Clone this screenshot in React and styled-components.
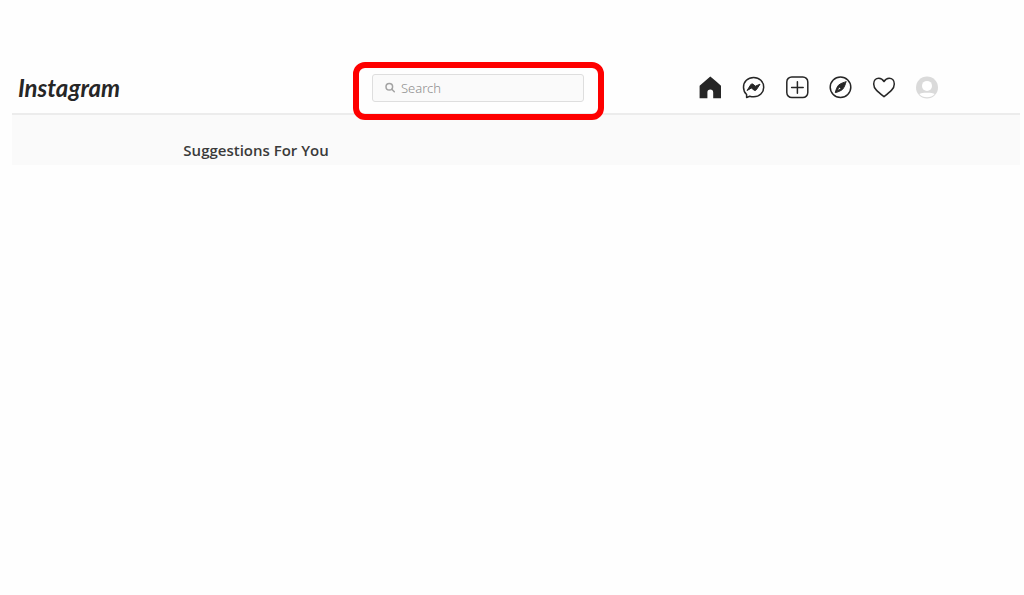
import React from "react";
import styled, { createGlobalStyle } from "styled-components";

const GlobalStyle = createGlobalStyle`
  *, *::before, *::after { box-sizing: border-box; }
  body {
    margin: 0;
    background: #fefefe;
    color: #262626;
    font-family: "Open Sans", "Noto Sans", sans-serif;
  }
`;

const Page = styled.div`
  padding: 62px 4px 0 12px;
`;

const Header = styled.header`
  display: grid;
  grid-template-columns: 1fr 212px 1fr;
  align-items: center;
  height: 53px;
  padding: 0 82px 0 6px;
  border-bottom: 2px solid #ececec;
`;

const Logo = styled.a`
  justify-self: start;
  color: #262626;
  font-family: "Lato", sans-serif;
  font-size: 24px;
  font-style: italic;
  font-weight: 700;
  line-height: 28px;
  text-decoration: none;
`;

const SearchForm = styled.form`
  position: relative;

  &::after {
    content: "";
    position: absolute;
    inset: -12px -20px -18px -19px;
    border: 6px solid #fe0000;
    border-radius: 12px;
    pointer-events: none;
  }
`;

const SearchField = styled.label`
  display: flex;
  align-items: center;
  gap: 5px;
  height: 28px;
  padding: 0 12px;
  border: 1px solid #dedede;
  border-radius: 3px;
  background: #fafafa;
  color: #a3a3a3;
`;

const SearchInput = styled.input`
  flex: 1;
  min-width: 0;
  padding: 0;
  border: 0;
  outline: 0;
  background: transparent;
  color: #262626;
  font-family: "Noto Sans", "Open Sans", sans-serif;
  font-size: 13px;
  font-weight: 300;
  line-height: 20px;

  &::placeholder {
    color: #8e8e8e;
    opacity: 1;
  }
`;

const Nav = styled.nav`
  display: flex;
  justify-content: space-between;
  justify-self: end;
  width: 239px;
`;

const NavLink = styled.a`
  display: block;
  height: 22px;
  color: #262626;
`;

const Icon = styled.svg`
  display: block;
  flex: none;
  width: ${(p) => p.$size}px;
  height: ${(p) => p.$size}px;
  overflow: visible;
  fill: none;
  stroke: currentColor;
  stroke-width: 1.5;
  stroke-linecap: round;
  stroke-linejoin: round;
`;

const Suggestions = styled.main`
  height: 50px;
  padding: 23px 17% 0;
  background: #fafafa;
`;

const Title = styled.h1`
  margin: 0;
  color: #3a3a3a;
  font-size: 15px;
  font-weight: 600;
  line-height: 24px;
  white-space: nowrap;
`;

const links = [
  {
    label: "Home",
    art: <path fill="currentColor" stroke="none" d="M11.3 -0.6 0.6 8.8V21.2H8.4V15.4C8.4 13.6 9.5 12.6 11.3 12.6S14.2 13.6 14.2 15.4V21.2H22V8.8L18.4 5.6 16.4 3.8Z" />,
  },
  {
    label: "Messages",
    art: (
      <>
        <path d="M11.7 0.5C5.7 0.5 1.5 4.8 1.5 10.2C1.5 13.2 2.7 15.7 4.6 17.5V20.6L7.7 19.2C9 19.6 10.3 19.8 11.7 19.8C17.5 19.8 21.7 15.6 21.7 10.2S17.5 0.5 11.7 0.5Z" />
        <path fill="currentColor" strokeWidth="1" d="M5.3 13.2 8.8 7.6C9.4 6.7 10.4 6.7 11.1 7.3L13.4 9.2 18 7.2 14.3 12.8C13.7 13.7 12.8 13.8 12.1 13.2L9.7 11.2Z" />
      </>
    ),
  },
  {
    label: "New post",
    art: (
      <>
        <rect x="0.8" y="-0.1" width="21" height="20.7" rx="5" />
        <path d="M11.4 4.7V16.3M5.6 10.5H17.2" />
      </>
    ),
  },
  {
    label: "Explore",
    art: (
      <>
        <circle cx="11.5" cy="10.3" r="10.3" />
        <path fill="currentColor" fillRule="evenodd" strokeWidth="1" d="M16.9 4.9C15 5.1 11 6.8 9.4 8.3C8 10 6.7 13.5 6.3 15.6C8.3 15.2 11.8 13.9 13.6 12.3C15 10.7 16.6 7 16.9 4.9ZM9.9 9.9 8.4 13.5 12.1 12.1Z" />
      </>
    ),
  },
  {
    label: "Activity",
    art: <path d="M11 19.7C8.2 17.4 5.6 15.3 3.4 13.1C1.6 11.3 0.7 9.4 0.7 7C0.7 3.7 2.8 1.2 5.8 1.2C8.2 1.2 9.8 2.5 11 4.5C12.2 2.5 13.8 1.2 16.2 1.2C19.2 1.2 21.3 3.7 21.3 7C21.3 9.4 20.4 11.3 18.6 13.1C16.4 15.3 13.8 17.4 11 19.7Z" />,
  },
  {
    label: "Profile",
    art: (
      <>
        <circle cx="11" cy="10.5" r="11" fill="#dadada" stroke="none" />
        <circle cx="11" cy="8.9" r="5" fill="#fff" stroke="none" />
        <path fill="#fff" stroke="none" d="M3.4 17C5.2 15.4 16.8 15.4 18.6 17C16.8 19.1 14.2 20.3 11 20.3S5.2 19.1 3.4 17Z" />
      </>
    ),
  },
];

export default function App() {
  return (
    <>
      <GlobalStyle />
      <Page>
        <Header>
          <Logo href="#">Instagram</Logo>
          <SearchForm role="search">
            <SearchField>
              <Icon $size={11} viewBox="0 0 11 11" aria-hidden="true">
                <circle cx="4.3" cy="4.8" r="3.3" />
                <path d="M6.8 7.3 9.3 9.8" />
              </Icon>
              <SearchInput type="text" placeholder="Search" aria-label="Search" />
            </SearchField>
          </SearchForm>
          <Nav aria-label="Main">
            {links.map(({ label, art }) => (
              <NavLink key={label} href="#" aria-label={label}>
                <Icon $size={22} viewBox="0 0 22 22" aria-hidden="true">
                  {art}
                </Icon>
              </NavLink>
            ))}
          </Nav>
        </Header>
        <Suggestions>
          <Title>Suggestions For You</Title>
        </Suggestions>
      </Page>
    </>
  );
}
